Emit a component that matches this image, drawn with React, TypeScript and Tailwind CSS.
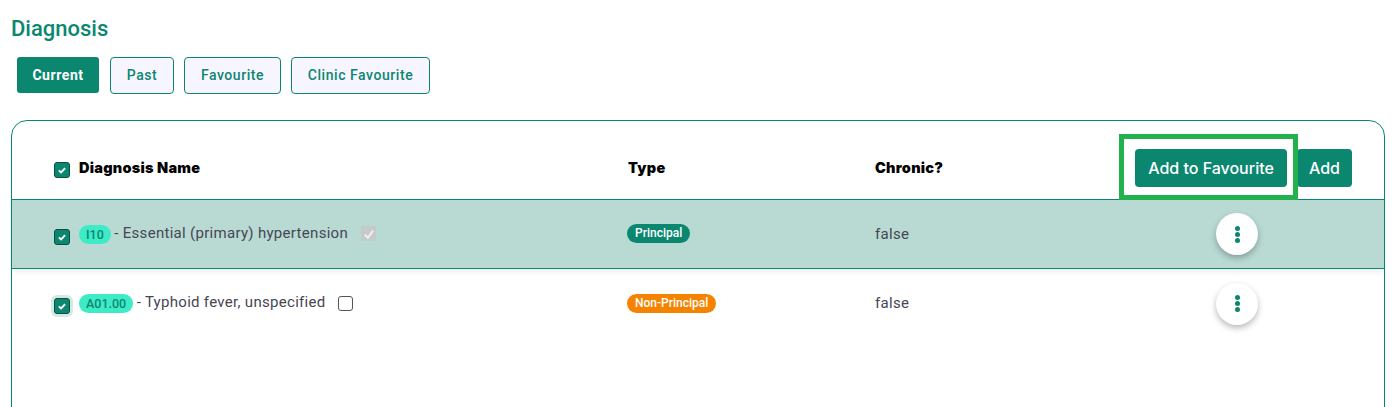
import React from "react";

function Box({ halo = false }: { halo?: boolean }) {
  return (
    <span className={`flex h-4 w-4 shrink-0 items-center justify-center rounded-[3px] border border-[#0b4f44] bg-[#0b8770] ${halo ? "shadow-[0_0_0_3px_#d3e9e3]" : ""}`}>
      <svg viewBox="0 0 16 16" className="h-[10px] w-[10px]">
        <path d="M3 8.5 L6.5 12 L13 5" fill="none" stroke="white" strokeWidth="3" />
      </svg>
    </span>
  );
}

function Dots() {
  return (
    <div className="flex h-[42px] w-[42px] flex-col items-center justify-center gap-[1px] rounded-full bg-white shadow-[0_3px_6px_rgba(0,0,0,0.28)]">
      <span className="h-[5px] w-[5px] rounded-full bg-[#0b8770]" />
      <span className="h-[5px] w-[5px] rounded-full bg-[#0b8770]" />
      <span className="h-[5px] w-[5px] rounded-full bg-[#0b8770]" />
    </div>
  );
}

function Row({ code, name, type, typeColor, active, halo, children }: { code: string; name: string; type: string; typeColor: string; active?: boolean; halo?: boolean; children: React.ReactNode }) {
  return (
    <div className={`flex h-[69px] items-center ${active ? "relative border-b border-[#0b8770] bg-[#b8dad3] shadow-[0_3px_6px_rgba(0,0,0,0.07)]" : "bg-white"}`}>
      <div className="flex w-[574px] items-center pl-[42px]">
        <span className="mt-[5px]"><Box halo={halo} /></span>
        <span className="ml-[9px] rounded-full bg-[#3debc7] px-[7px] text-[12.5px] font-medium leading-[19px] text-[#0b8770]">{code}</span>
        <span className="mb-[2px] ml-[3.5px] text-[15px] tracking-[0.3px] text-[#464655]">- {name}</span>
        {children}
      </div>
      <div className="w-[42px]" />
      <div className="w-[247px]">
        <span className={`-ml-px -mt-[2px] inline-block rounded-full px-[8px] align-middle text-[12px] font-medium leading-[19px] text-white ${typeColor}`}>{type}</span>
      </div>
      <div className="w-[341px] text-[15px] tracking-[0.3px] text-[#464655]">false</div>
      <Dots />
    </div>
  );
}

export default function App() {
  const tab = "flex h-[37px] items-center justify-center rounded-[4px] border border-[#0b8770] bg-[#f7f5ff] text-[14px] font-medium tracking-[0.56px] text-[#0b8770]";
  const head = "text-[14.5px] font-black tracking-[0.25px] text-black [font-family:Inter,sans-serif]";
  return (
    <div className="h-[407px] w-[1396px] overflow-hidden bg-white [font-family:Roboto,sans-serif]">
      <h1 className="pl-[11px] pt-[15px] text-[22px] font-medium leading-[28px] text-[#0b8770]">Diagnosis</h1>
      <div className="mt-[14px] flex gap-[10px] pl-[17px]">
        <button className="mr-px flex h-[36px] w-[82px] items-center justify-center rounded-[3px] bg-[#0b8770] text-[14px] font-bold tracking-[0.56px] text-white">Current</button>
        <button className={`w-[64px] ${tab}`}>Past</button>
        <button className={`w-[97px] ${tab}`}>Favourite</button>
        <button className={`w-[139px] ${tab}`}>Clinic Favourite</button>
      </div>
      <div className="relative ml-[11px] mt-[26px] h-[400px] w-[1374px] overflow-hidden rounded-[16px] border border-[#0b8770]">
        <div className="flex h-[79px] items-center border-b border-[#0b8770] pt-[16px]">
          <div className="flex w-[574px] items-center pl-[42px]">
            <span className="mt-[4px]"><Box /></span>
            <span className={`ml-[9px] ${head}`}>Diagnosis Name</span>
          </div>
          <div className="w-[42px]" />
          <div className={`w-[247px] ${head}`}>Type</div>
          <div className={`w-[260px] ${head}`}>Chronic?</div>
          <button className="h-[38px] w-[152px] rounded-[4px] bg-[#0b8770] text-[16px] font-medium text-white [font-family:Inter,sans-serif]">Add to Favourite</button>
          <button className="ml-[10px] h-[38px] w-[55px] rounded-[4px] bg-[#0b8770] text-[16px] font-medium text-white [font-family:Inter,sans-serif]">Add</button>
        </div>
        <Row active code="I10" name="Essential (primary) hypertension" type="Principal" typeColor="bg-[#0b8770]">
          <span className="mb-[1px] ml-[13px] flex h-[15px] w-[15px] shrink-0 items-center justify-center rounded-[1px] bg-[#c6cac8]">
            <svg viewBox="0 0 16 16" className="h-[12px] w-[12px]"><path d="M2.5 9 L6.5 13 L13.5 3.5" fill="none" stroke="#eef1f0" strokeWidth="2.5" /></svg>
          </span>
        </Row>
        <Row halo code="A01.00" name="Typhoid fever, unspecified" type="Non-Principal" typeColor="bg-[#f58300]">
          <span className="mb-[1px] ml-[12px] h-[15px] w-[15px] shrink-0 rounded-[3px] border border-[#55555f] bg-white" />
        </Row>
        <div className="pointer-events-none absolute left-[1107px] top-[13px] h-[66px] w-[179px] border-[5px] border-[#22b14c]" />
      </div>
    </div>
  );
}
